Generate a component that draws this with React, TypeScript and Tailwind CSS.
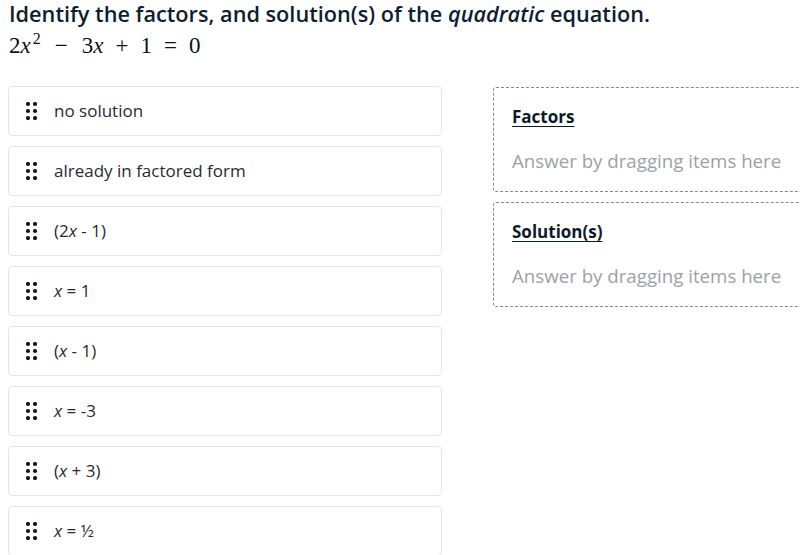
const items: { key: string; content: React.ReactNode }[] = [
  { key: 'none', content: 'no solution' },
  { key: 'factored', content: 'already in factored form' },
  { key: 'f1', content: <>(2<i>x</i> - 1)</> },
  { key: 's1', content: <><i>x</i> = 1</> },
  { key: 'f2', content: <>(<i>x</i> - 1)</> },
  { key: 's2', content: <><i>x</i> = -3</> },
  { key: 'f3', content: <>(<i>x</i> + 3)</> },
  { key: 's3', content: <><i>x</i> = ½</> },
];

function DragHandle() {
  return (
    <svg width="11" height="18" viewBox="0 0 11 18" className="shrink-0">
      {[2, 9, 16].map((cy) =>
        [2, 9].map((cx) => <circle key={`${cx}-${cy}`} cx={cx} cy={cy} r="2.1" fill="#111827" />)
      )}
    </svg>
  );
}

function DropZone({ title }: { title: string }) {
  return (
    <div className="h-[105px] border border-dashed border-[#7d8d9b] rounded-[3px] pl-[18px] pt-[17px]">
      <div className="text-[17px] font-bold text-[#0d1a2b] underline underline-offset-[3px] leading-[24px]">{title}</div>
      <div className="mt-[20px] text-[18.7px] text-[#9ba2aa] leading-[24px]">Answer by dragging items here</div>
    </div>
  );
}

export default function App() {
  return (
    <div
      className="w-[800px] h-[555px] overflow-hidden bg-white"
      style={{ fontFamily: '"Open Sans", sans-serif' }}
    >
      <div className="pl-[9px]">
        <h1 className="text-[21.7px] font-semibold text-[#0f1d31] leading-[28px]">
          Identify the factors, and solution(s) of the <i>quadratic</i> equation.
        </h1>
        <div
          className="text-[23px] text-[#111] leading-[30px] mt-[3px]"
          style={{ fontFamily: '"Liberation Serif", "DejaVu Serif", serif' }}
        >
          2<i>x</i>
          <sup className="text-[16px] top-[-9px] ml-[2px]">2</sup>
          <span className="mx-[14px]">−</span>3<i>x</i>
          <span className="mx-[12px]">+</span>1<span className="mx-[12px]">=</span>0
        </div>
      </div>

      <div className="flex mt-[25px] pl-[8px] w-[1300px]">
        <div className="w-[434px] flex flex-col gap-[10px]">
          {items.map((item) => (
            <div
              key={item.key}
              className="h-[50px] flex items-center gap-[17px] pl-[17px] border border-[#e3e5e8] rounded-[4px] bg-white"
            >
              <DragHandle />
              <span className="text-[17px] text-[#262b33]">{item.content}</span>
            </div>
          ))}
        </div>
        <div className="ml-[51px] w-[440px] flex flex-col gap-[10px] pt-[1px]">
          <DropZone title="Factors" />
          <DropZone title="Solution(s)" />
        </div>
      </div>
    </div>
  );
}
